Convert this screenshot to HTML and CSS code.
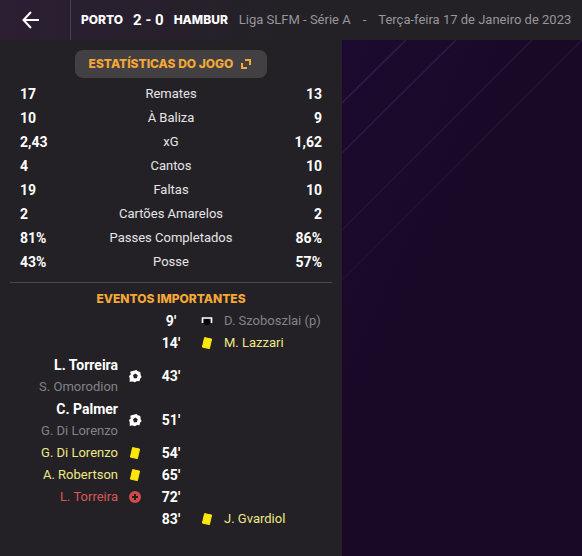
FILE: index.html
```
<!DOCTYPE html>
<html lang="pt">
<head>
    <meta charset="UTF-8">
    <meta name="viewport" content="width=device-width, initial-scale=1.0">
    <title>Porto 2 - 0 Hambur</title>
    <link rel="stylesheet" href="styles.css">
</head>
<body>
    <svg class="symbols" aria-hidden="true">
        <symbol id="card" viewBox="0 0 14 14">
            <path d="M4.6 1.6l7 1.5-2.2 9.5-7-1.5z" fill="#ffe70c" stroke="#ffe70c" stroke-linejoin="round"/>
        </symbol>
        <symbol id="ball" viewBox="0 0 14 14">
            <path d="M4.5 2L8.5 1l1.3 1.2 2.5.8.3 3 1 2-1.5 1.8-.6 2.4-2.6-.2L7 13.2l-2.2-.8-3.2.4.2-3L1 7l1.8-1.4-.6-2.8z" fill="#fff"/>
            <path d="M7.3 4.6l2.4 1.7-.9 2.9H5.9L5 6.3z" fill="#232126"/>
        </symbol>
        <symbol id="injury" viewBox="0 0 14 14">
            <circle cx="7" cy="7" r="6" fill="#d14b4b"/>
            <path d="M7 4v6M4 7h6" stroke="#232126" stroke-width="2"/>
        </symbol>
        <symbol id="missed" viewBox="0 0 14 14">
            <circle cx="7" cy="8" r="3" fill="#000"/>
            <path d="M2.5 9V4h9v5" fill="none" stroke="#fff" stroke-width="1.6"/>
        </symbol>
    </svg>

    <header class="topbar">
        <button class="back" aria-label="Voltar">
            <svg width="18" height="18" viewBox="0 0 18 18"><path d="M9 1L1.5 9 9 17M1.5 9H17" fill="none" stroke="#fff" stroke-width="2"/></svg>
        </button>
        <div class="match">
            <span class="team">PORTO</span>
            <span class="score">2 - 0</span>
            <span class="team">HAMBUR</span>
        </div>
        <div class="info">
            <span>Liga SLFM - Série A</span>
            <span>-</span>
            <span>Terça-feira 17 de Janeiro de 2023</span>
        </div>
    </header>

    <main class="content">
        <section class="panel">
            <button class="stats-button">
                ESTATÍSTICAS DO JOGO
                <svg width="10" height="10" viewBox="0 0 10 10"><path d="M4 1h5v5M1 4v5h5" fill="none" stroke="#f5a835" stroke-width="2"/></svg>
            </button>

            <table class="stats">
                <tr><td>17</td><th scope="row">Remates</th><td>13</td></tr>
                <tr><td>10</td><th scope="row">À Baliza</th><td>9</td></tr>
                <tr><td>2,43</td><th scope="row">xG</th><td>1,62</td></tr>
                <tr><td>4</td><th scope="row">Cantos</th><td>10</td></tr>
                <tr><td>19</td><th scope="row">Faltas</th><td>10</td></tr>
                <tr><td>2</td><th scope="row">Cartões Amarelos</th><td>2</td></tr>
                <tr><td>81%</td><th scope="row">Passes Completados</th><td>86%</td></tr>
                <tr><td>43%</td><th scope="row">Posse</th><td>57%</td></tr>
            </table>

            <h2 class="events-title">EVENTOS IMPORTANTES</h2>

            <ul class="events">
                <li class="event">
                    <span class="minute">9'</span>
                    <svg class="icon away"><use href="#missed"/></svg>
                    <span class="player away muted">D. Szoboszlai (p)</span>
                </li>
                <li class="event">
                    <span class="minute">14'</span>
                    <svg class="icon away"><use href="#card"/></svg>
                    <span class="player away booked">M. Lazzari</span>
                </li>
                <li class="event">
                    <div class="player"><div class="scorer">L. Torreira</div><div class="muted">S. Omorodion</div></div>
                    <svg class="icon"><use href="#ball"/></svg>
                    <span class="minute">43'</span>
                </li>
                <li class="event">
                    <div class="player"><div class="scorer">C. Palmer</div><div class="muted">G. Di Lorenzo</div></div>
                    <svg class="icon"><use href="#ball"/></svg>
                    <span class="minute">51'</span>
                </li>
                <li class="event">
                    <span class="player booked">G. Di Lorenzo</span>
                    <svg class="icon"><use href="#card"/></svg>
                    <span class="minute">54'</span>
                </li>
                <li class="event">
                    <span class="player booked">A. Robertson</span>
                    <svg class="icon"><use href="#card"/></svg>
                    <span class="minute">65'</span>
                </li>
                <li class="event">
                    <span class="player injured">L. Torreira</span>
                    <svg class="icon"><use href="#injury"/></svg>
                    <span class="minute">72'</span>
                </li>
                <li class="event">
                    <span class="minute">83'</span>
                    <svg class="icon away"><use href="#card"/></svg>
                    <span class="player away booked">J. Gvardiol</span>
                </li>
            </ul>
        </section>

        <svg class="backdrop" preserveAspectRatio="xMinYMin slice" viewBox="0 0 240 516" aria-hidden="true">
            <defs>
                <linearGradient id="fade" gradientUnits="userSpaceOnUse" x1="0" y1="0" x2="140" y2="210">
                    <stop offset="0" stop-color="#33204f"/>
                    <stop offset="1" stop-color="#33204f" stop-opacity="0"/>
                </linearGradient>
            </defs>
            <path d="M64 0L0 63M114 0L0 113M190 0L0 190M240 0L0 240" fill="none" stroke="url(#fade)" stroke-width="1.5"/>
        </svg>
    </main>
</body>
</html>
```

FILE: styles.css
```
* {
    box-sizing: border-box;
}

body {
    margin: 0;
    min-height: 100vh;
    display: flex;
    flex-direction: column;
    background: #232126;
    color: #fff;
    font-family: Roboto, "Liberation Sans", sans-serif;
    font-size: 13px;
    line-height: 22px;
}

button {
    border: none;
    font: inherit;
    cursor: pointer;
}

.symbols {
    position: absolute;
    width: 0;
    height: 0;
}

.topbar {
    display: flex;
    align-items: center;
    height: 40px;
    background: linear-gradient(to right, #2c1e33, #232126 50%);
    white-space: nowrap;
}

.back {
    display: flex;
    flex-shrink: 0;
    align-items: center;
    justify-content: center;
    width: 71px;
    height: 40px;
    padding: 0 8px 0 0;
    border-right: 1px solid #45414a;
    background: none;
}

.match {
    display: flex;
    align-items: center;
    gap: 10px;
    padding: 0 11px 0 10px;
}

.team,
.stats-button,
.events-title {
    font-family: Inter, "Liberation Sans", sans-serif;
    font-size: 12px;
    font-weight: 800;
}

.score {
    font-size: 15px;
    font-weight: 700;
}

.info {
    display: flex;
    gap: 12px;
    color: #98959b;
}

.content {
    flex: 1;
    display: grid;
    grid-template-columns: 57fr 40fr;
}

.panel {
    display: flex;
    flex-direction: column;
    padding-top: 10px;
    background: #232126;
}

.stats-button {
    display: flex;
    align-items: center;
    gap: 8px;
    align-self: center;
    height: 28px;
    padding: 0 16px 0 14px;
    border-radius: 8px;
    background: #424043;
    color: #f5a835;
}

.stats {
    margin: 4px 10px 0;
    border-collapse: collapse;
    table-layout: fixed;
}

.stats td,
.stats th {
    height: 24px;
    padding: 0;
}

.stats td {
    width: 60px;
    padding-left: 10px;
    font-size: 14px;
    font-weight: 700;
}

.stats td:last-child {
    padding: 0 10px 0 0;
    text-align: right;
}

.stats th {
    font-weight: 400;
    color: #e6e5e7;
}

.events-title {
    margin: 8px 10px 0;
    padding-top: 5px;
    border-top: 1px solid #4a484d;
    color: #f5a835;
    text-align: center;
}

.events {
    margin: 0;
    padding: 0;
    list-style: none;
}

.event {
    display: grid;
    grid-template-columns: 1fr 34px 38px 34px 1fr;
    align-items: center;
}

.player {
    grid-area: 1 / 1;
    text-align: right;
}

.icon {
    grid-area: 1 / 2;
    justify-self: center;
    width: 14px;
    height: 14px;
}

.minute {
    grid-area: 1 / 3;
    font-size: 14px;
    font-weight: 700;
    text-align: center;
}

.icon.away {
    grid-column: 4;
}

.player.away {
    grid-column: 5;
    text-align: left;
}

.scorer {
    font-size: 14px;
    font-weight: 700;
}

.muted {
    color: #858287;
}

.booked {
    color: #eee884;
}

.injured {
    color: #d95757;
}

.backdrop {
    width: 100%;
    height: 100%;
    background: linear-gradient(to bottom right, #1d0a30, #190927 40%);
}
```
